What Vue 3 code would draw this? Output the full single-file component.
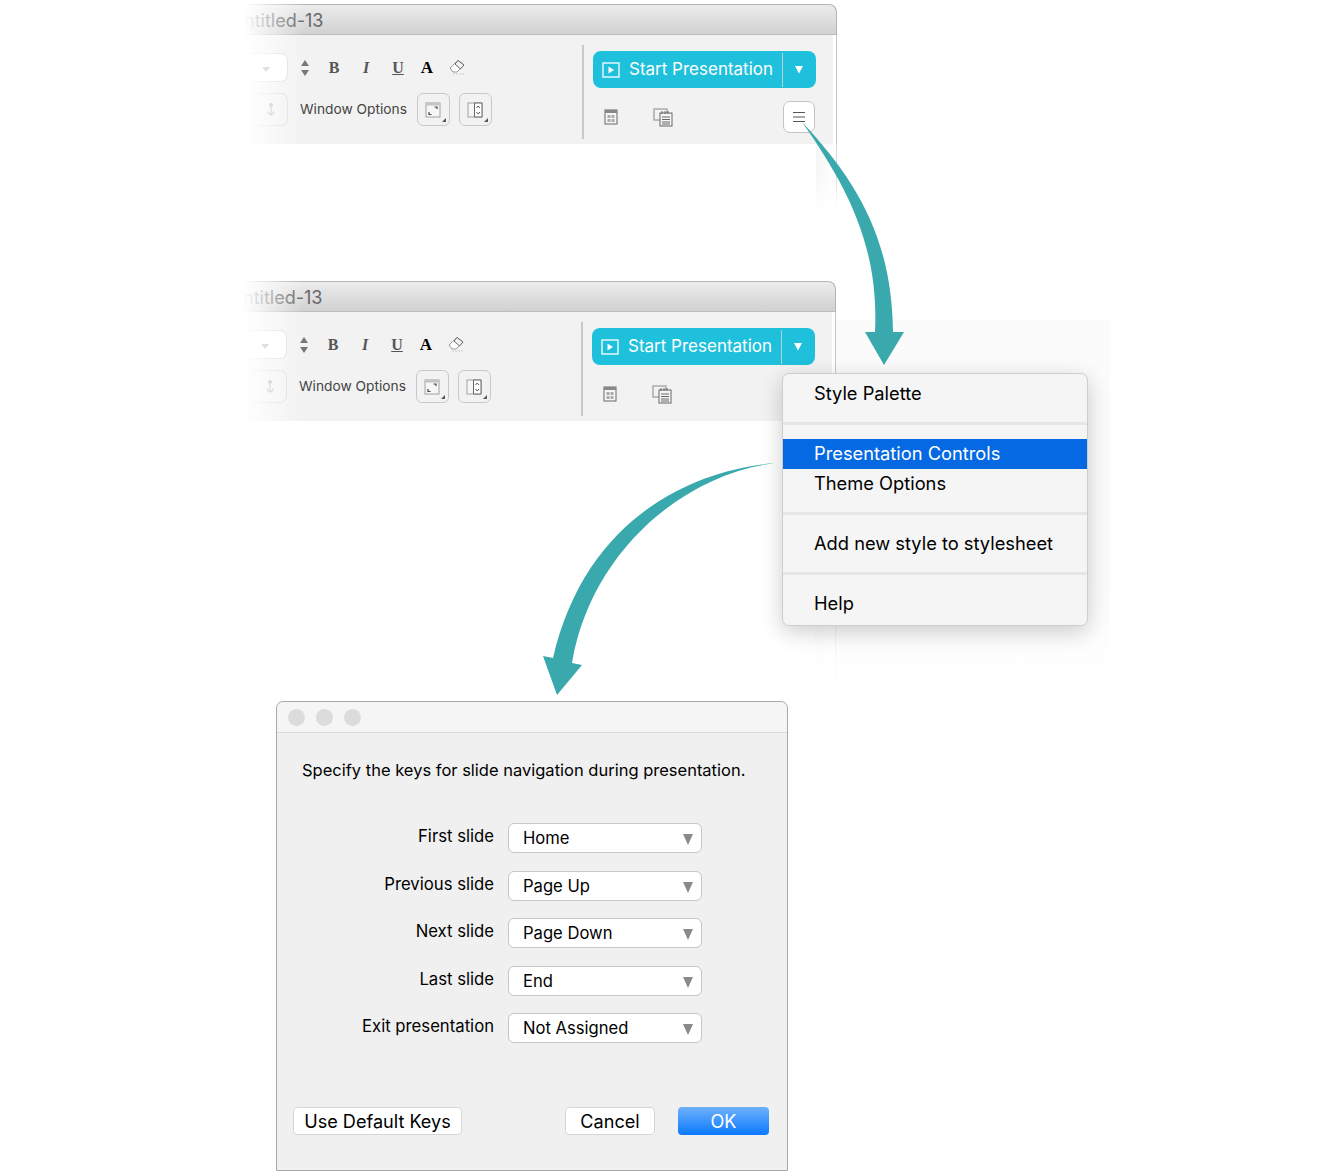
<script setup>
const shots = ['shot-top', 'shot-bottom']

const slideKeys = [
  { label: 'First slide', value: 'Home' },
  { label: 'Previous slide', value: 'Page Up' },
  { label: 'Next slide', value: 'Page Down' },
  { label: 'Last slide', value: 'End' },
  { label: 'Exit presentation', value: 'Not Assigned' }
]
</script>

<template>
  <div class="canvas">
    <div class="menu-glow"></div>

    <div v-for="shot in shots" :key="shot" class="window" :class="shot">
      <div class="titlebar"><span class="title">ntitled-13</span></div>
      <div class="toolbar">
        <div class="tools-left">
          <div class="tool-row">
            <div class="field"><span class="field-arrow"></span></div>
            <svg class="stepper" width="10" height="18" viewBox="0 0 10 18">
              <path d="M5 1 9 7H1Z M5 17 1 11H9Z" fill="#777" />
            </svg>
            <span class="fmt fmt-b">B</span>
            <span class="fmt fmt-i">I</span>
            <span class="fmt fmt-u">U</span>
            <span class="fmt fmt-a">A</span>
            <svg class="eraser" width="18" height="17" viewBox="0 0 18 17">
              <path d="M2 10 10 2.500 16 7l-7 7H5Z" fill="#fff" stroke="#999" />
              <path d="M7 6 10 2.500 16 7l-3.500 4Z" fill="#f2f2f2" stroke="#666" />
              <path d="M5 16h11" stroke="#ccc" stroke-dasharray="2 1" />
            </svg>
          </div>
          <div class="tool-row tool-row-two">
            <div class="field field-low">
              <svg width="10" height="15" viewBox="0 0 10 15">
                <circle cx="5" cy="3" r="2" fill="#b0b0b0" />
                <path d="M5 5v8M2 9.500C2.500 12 3.700 13 5 13s2.500-1 3-3.500" fill="none" stroke="#b0b0b0" stroke-width="1.200" />
              </svg>
            </div>
            <span class="window-options">Window Options</span>
            <button class="square-btn">
              <svg width="16" height="16" viewBox="0 0 16 16">
                <rect x="1" y="1" width="14" height="14" fill="#f6f6f6" stroke="#a0a0a0" />
                <path d="M1 1h14v2.500H1Z" fill="#c4c4c4" />
                <path d="M4 10v2.500h2.500M12 7V5H9.500" fill="none" stroke="#444" stroke-width="1.200" />
              </svg>
              <span class="corner"></span>
            </button>
            <button class="square-btn">
              <svg width="16" height="16" viewBox="0 0 16 16">
                <rect x="1" y="1" width="14" height="14" fill="#f6f6f6" stroke="#a0a0a0" />
                <path d="M7.500 1h7.500v14H7.500Z" fill="#fff" stroke="#666" />
                <path d="M9.500 6 11.200 4 13 6M9.500 10l1.700 2L13 10" fill="none" stroke="#555" />
              </svg>
              <span class="corner"></span>
            </button>
          </div>
        </div>

        <div class="tools-right">
          <div class="start-btn">
            <svg width="18" height="16" viewBox="0 0 18 16">
              <rect x="1" y="1" width="16" height="14" fill="none" stroke="#fff" stroke-width="1.300" />
              <path d="M6.500 4.500 12 8l-5.500 3.500Z" fill="#fff" />
            </svg>
            <span class="start-label">Start Presentation</span>
            <span class="start-split"></span>
            <svg class="start-caret" width="10" height="9" viewBox="0 0 10 9">
              <path d="M1 1h8L5 8.500Z" fill="#fff" />
            </svg>
          </div>
          <div class="sub-tools">
            <svg class="sub-grid" width="14" height="16" viewBox="0 0 14 16">
              <rect x="1" y="1" width="12" height="14" fill="#f6f6f6" stroke="#666" />
              <path d="M1 1h12v3H1Z" fill="#888" />
              <path d="M3.500 6h3v3h-3ZM7.500 6h3v3h-3ZM3.500 10h3v3h-3ZM7.500 10h3v3h-3Z" fill="#aaa" />
            </svg>
            <svg class="sub-notes" width="20" height="19" viewBox="0 0 20 19">
              <rect x="1" y="1" width="13" height="11" fill="#f3f3f3" stroke="#aaa" stroke-width="1.500" />
              <rect x="7" y="5" width="12" height="13" fill="#f6f6f6" stroke="#666" />
              <path d="M9 9h8M9 11.500h8M9 14h8M9 16h8" stroke="#666" />
              <path d="M9 3v3M12 3v3M15 3v3" stroke="#666" />
            </svg>
            <button class="menu-btn">
              <svg width="14" height="12" viewBox="0 0 14 12">
                <path d="M1 1.500h12M1 6h12M1 10.500h12" stroke="#555" stroke-width="1.200" />
              </svg>
            </button>
          </div>
        </div>
        <span class="toolbar-fade"></span>
      </div>
      <div class="window-tail"></div>
    </div>

    <div class="context-menu">
      <div class="menu-item">Style Palette</div>
      <div class="menu-sep"></div>
      <div class="menu-item menu-item-active">Presentation Controls</div>
      <div class="menu-item">Theme Options</div>
      <div class="menu-sep"></div>
      <div class="menu-item">Add new style to stylesheet</div>
      <div class="menu-sep"></div>
      <div class="menu-item">Help</div>
    </div>

    <div class="dialog">
      <div class="dialog-title">
        <span class="light"></span>
        <span class="light"></span>
        <span class="light"></span>
      </div>
      <p class="dialog-text">Specify the keys for slide navigation during presentation.</p>
      <div class="key-form">
        <template v-for="row in slideKeys" :key="row.label">
          <label class="key-label">{{ row.label }}</label>
          <div class="key-select">
            <span>{{ row.value }}</span>
            <svg width="10" height="11" viewBox="0 0 10 11"><path d="M0 0h10L5 11Z" fill="#8a8a8a" /></svg>
          </div>
        </template>
      </div>
      <div class="dialog-actions">
        <button class="dlg-btn btn-default">Use Default Keys</button>
        <button class="dlg-btn btn-cancel">Cancel</button>
        <button class="dlg-btn btn-ok">OK</button>
      </div>
    </div>

    <svg class="arrows" width="1340" height="1174" viewBox="0 0 1340 1174">
      <path fill="#39a9ad" d="M802 122C850 190 879 250 875 332H865L884 365L904 332H893C892 240 858 182 802 122Z" />
      <path fill="#39a9ad" d="M775 463C690 470 585 520 553 658L543 656L557 695L582 665L572 663C590 555 680 475 775 463Z" />
    </svg>
  </div>
</template>

<style>
html, body {
  margin: 0;
  background: #fff;
}
</style>

<style scoped>
.canvas {
  position: relative;
  width: 1340px;
  height: 1174px;
  overflow: hidden;
  background: #fff;
  font-family: Inter, "Noto Sans", sans-serif;
  color: #000;
}

.menu-glow {
  position: absolute;
  left: 836px;
  top: 320px;
  width: 274px;
  height: 370px;
  background: linear-gradient(#fbfbfb 70%, #fff);
}

.window {
  position: absolute;
  width: 593px;
  overflow: hidden;
}
.shot-top {
  left: 244px;
  top: 4px;
}
.shot-bottom {
  left: 243px;
  top: 281px;
}

.titlebar {
  height: 31px;
  box-sizing: border-box;
  border: 1px solid #b4b4b4;
  border-left: none;
  border-bottom-color: #bdbdbd;
  border-radius: 0 8px 0 0;
  background: linear-gradient(#ececec, #d1d1d1);
  overflow: hidden;
}
.title {
  display: block;
  font-size: 18px;
  line-height: 31px;
  color: #666;
}

.toolbar {
  position: relative;
  display: flex;
  height: 109px;
  box-sizing: border-box;
  padding-top: 10px;
  background: #f2f2f2;
  border-right: 1px solid #c4c4c4;
  box-shadow: inset -3px 0 0 #fff;
}
.toolbar-fade {
  position: absolute;
  left: 0;
  top: -31px;
  bottom: 0;
  width: 60px;
  background: linear-gradient(to right, #fff, rgba(255, 255, 255, 0));
}

.tools-left {
  width: 338px;
  height: 94px;
  border-right: 2px solid #c9c9c9;
}
.tool-row {
  display: flex;
  align-items: center;
  height: 29px;
  margin-top: 8px;
}
.tool-row-two {
  height: 33px;
  margin-top: 11px;
}
.field {
  display: flex;
  align-items: center;
  justify-content: flex-end;
  width: 44px;
  height: 29px;
  box-sizing: border-box;
  padding-right: 17px;
  background: #fff;
  border: 1px solid #dcdcdc;
  border-left: none;
  border-radius: 0 7px 7px 0;
}
.field-low {
  height: 33px;
  background: #f2f2f2;
  padding-right: 11px;
}
.field-arrow {
  width: 0;
  height: 0;
  margin-top: 4px;
  border-left: 4px solid transparent;
  border-right: 4px solid transparent;
  border-top: 5px solid #aaa;
}
.stepper {
  margin-left: 12px;
}
.fmt {
  width: 20px;
  text-align: center;
  font-family: "Liberation Serif", serif;
  font-weight: 700;
  font-size: 16px;
  color: #555;
}
.fmt-b {
  margin-left: 14px;
}
.fmt-i {
  margin-left: 12px;
  font-style: italic;
}
.fmt-u {
  margin-left: 12px;
  text-decoration: underline;
}
.fmt-a {
  margin-left: 9px;
  color: #000;
  font-size: 17px;
}
.eraser {
  margin-left: 11px;
  margin-top: -2px;
}
.window-options {
  margin: 0 1px 2px 12px;
  font-size: 13.750px;
  color: #444;
  white-space: nowrap;
}
.square-btn {
  position: relative;
  display: flex;
  align-items: center;
  justify-content: center;
  width: 33px;
  height: 33px;
  padding: 0;
  margin-left: 9px;
  background: #f2f2f2;
  border: 1px solid #c8c8c8;
  border-radius: 6px;
}
.corner {
  position: absolute;
  right: 3px;
  bottom: 3px;
  width: 0;
  height: 0;
  border-left: 4px solid transparent;
  border-bottom: 4px solid #555;
}

.tools-right {
  flex: 1;
  padding: 6px 0 0 9px;
}
.start-btn {
  display: flex;
  align-items: center;
  width: 223px;
  height: 37px;
  box-sizing: border-box;
  padding-left: 9px;
  background: #1fc0dc;
  border-radius: 8px;
  color: #fff;
}
.start-label {
  margin: 0 0 2px 9px;
  font-size: 17px;
  white-space: nowrap;
}
.start-split {
  width: 1px;
  height: 34px;
  margin-left: 9px;
  background: #b9cfd3;
}
.start-caret {
  margin-left: 11px;
}
.sub-tools {
  position: relative;
  display: flex;
  align-items: center;
  height: 33px;
  margin-top: 12px;
}
.sub-grid {
  margin-left: 11px;
}
.sub-notes {
  margin-left: 35px;
  margin-top: 2px;
}
.menu-btn {
  display: flex;
  align-items: center;
  justify-content: center;
  width: 32px;
  height: 32px;
  padding: 0;
  margin-left: 110px;
  background: #fff;
  border: 1px solid #c4c4c4;
  border-radius: 7px;
}

.window-tail {
  height: 66px;
  border-right: 1px solid #d8d8d8;
  background: linear-gradient(to right, transparent 572px, #f6f6f6 572px, #fff 100%);
  -webkit-mask-image: linear-gradient(#000 40%, transparent);
  mask-image: linear-gradient(#000 40%, transparent);
}
.shot-bottom .window-tail {
  height: 268px;
}

.context-menu {
  position: absolute;
  left: 782px;
  top: 373px;
  width: 306px;
  height: 253px;
  box-sizing: border-box;
  padding: 5px 0 7px;
  background: #f5f5f5;
  border: 1px solid #cdcdcd;
  border-radius: 7px;
  box-shadow: 0 6px 22px rgba(0, 0, 0, 0.2);
}
.menu-item {
  height: 30px;
  padding-left: 31px;
  font-size: 18.300px;
  line-height: 29px;
  white-space: nowrap;
}
.menu-item-active {
  background: #0469e3;
  color: #fff;
}
.menu-sep {
  position: relative;
  height: 30px;
}
.menu-sep::after {
  content: "";
  position: absolute;
  left: 0;
  right: 0;
  top: 13px;
  height: 3px;
  background: #e6e6e6;
}

.dialog {
  position: absolute;
  left: 276px;
  top: 701px;
  width: 512px;
  height: 470px;
  box-sizing: border-box;
  background: #f0f0f0;
  border: 1px solid #a9a9a9;
  border-radius: 7px 7px 0 0;
}
.dialog-title {
  display: flex;
  align-items: center;
  gap: 11px;
  height: 30px;
  padding-left: 11px;
  background: #f5f5f5;
  border-bottom: 1px solid #dcdcdc;
  border-radius: 7px 7px 0 0;
}
.light {
  width: 17px;
  height: 17px;
  border-radius: 50%;
  background: #dcdcdc;
}
.dialog-text {
  margin: 27px 0 0 25px;
  font-size: 16.500px;
  line-height: 20px;
  white-space: nowrap;
}
.key-form {
  display: grid;
  grid-template-columns: 217px 194px;
  column-gap: 14px;
  row-gap: 17.500px;
  margin-top: 43px;
}
.key-label {
  align-self: center;
  margin-bottom: 4px;
  text-align: right;
  font-size: 16.700px;
}
.key-select {
  display: flex;
  align-items: center;
  justify-content: space-between;
  height: 30px;
  box-sizing: border-box;
  padding: 0 8px 0 14px;
  background: #fff;
  border: 1px solid #c6c6c6;
  border-radius: 6px;
  font-size: 16.600px;
}
.key-select svg {
  margin-top: 3px;
}
.dialog-actions {
  display: flex;
  margin-top: 64px;
  padding: 0 18px 0 16px;
}
.dlg-btn {
  height: 28px;
  padding: 0;
  box-sizing: border-box;
  background: #fff;
  border: 1px solid #d6d6d6;
  border-radius: 4px;
  font-family: inherit;
  font-size: 18.100px;
  color: #000;
}
.btn-default {
  width: 169px;
}
.btn-cancel {
  width: 90px;
  margin-left: auto;
}
.btn-ok {
  width: 91px;
  margin-left: 23px;
  border: none;
  background: linear-gradient(#6fb1fb, #0a79fe);
  color: #fff;
}

.arrows {
  position: absolute;
  left: 0;
  top: 0;
  pointer-events: none;
}
</style>
